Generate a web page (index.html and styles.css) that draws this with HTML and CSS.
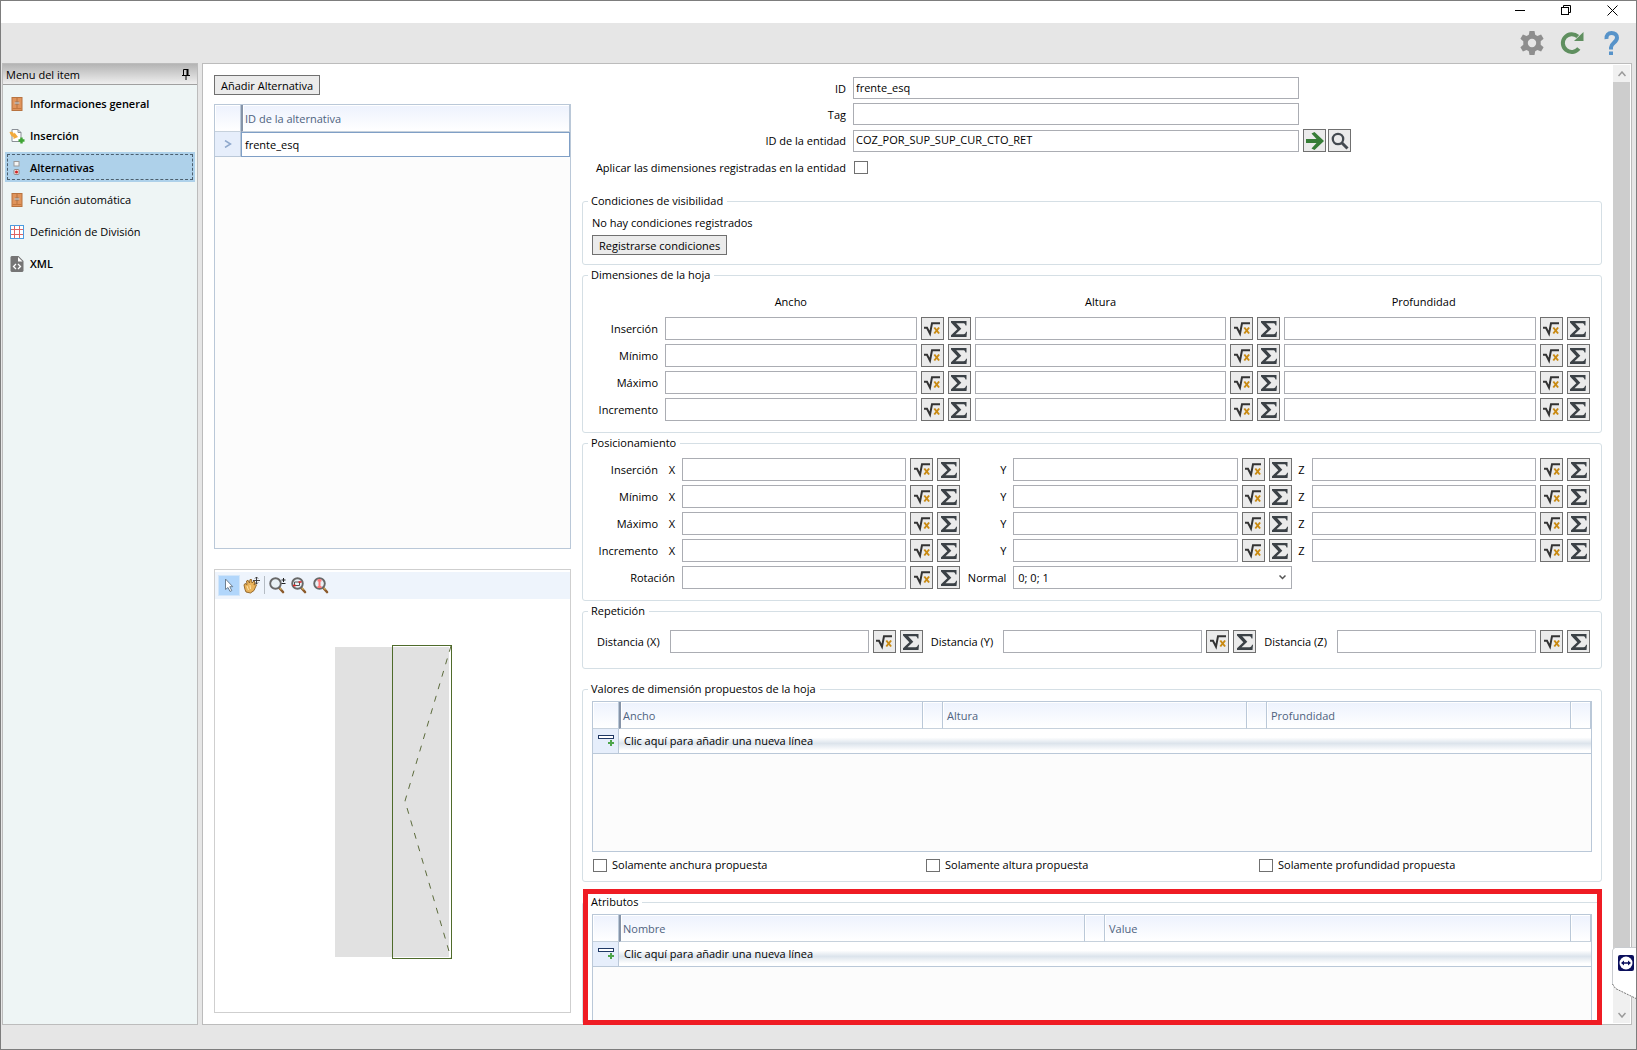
FILE: index.html
```html
<!DOCTYPE html>
<html lang="es">
<head>
  <meta charset="UTF-8">
  <title>Menu del item</title>
  <link rel="stylesheet" href="styles.css">
</head>
<body>
  <!-- Shared icons -->
  <svg class="sprite" aria-hidden="true">
    <symbol id="i-door" viewBox="0 0 11 14">
      <rect x="0.5" y="0.5" width="10" height="13" fill="#e0945c" stroke="#b8733f"/>
      <path d="M5.5 1v11" stroke="#b8733f"/>
      <path d="M1 11.5h9" stroke="#c4783f"/>
      <path d="M4.5 4.500v3M6.500 4.500v3" stroke="#5f6468"/>
      <path d="M3 6h5" stroke="#d9dcdf"/>
    </symbol>
    <symbol id="i-root" viewBox="0 0 16 16">
      <path d="M0 6.700h3l3 6L8 2.200H16" fill="none" stroke="#333" stroke-width="2"/>
      <path d="M10.300 6.500l4.800 6M15.100 6.500l-4.800 6" stroke="#c98a12" stroke-width="2"/>
    </symbol>
    <symbol id="i-sum" viewBox="0 0 16 16">
      <path d="M0 0H15.500V4.500H14.500C14.200 2.800 13.500 2.300 12 2.300H5.200L10.300 7.700 4.500 13.200H12.500C14 13.200 14.700 12.300 15 10.800H16L15.500 16H0V14.200L6.300 8.200 0 1.500z" fill="#3b4146"/>
    </symbol>
    <symbol id="i-addrow" viewBox="0 0 16 12">
      <rect x="0.5" y="0.5" width="15" height="3" fill="#fff" stroke="#1f3864"/>
      <path d="M13 5v6M10 8h6" stroke="#4ea64b" stroke-width="2"/>
    </symbol>
    <symbol id="i-lens" viewBox="0 0 17 17">
      <path d="M9.500 10l4.500 5" stroke="#8b5a2b" stroke-width="2.600" stroke-linecap="round"/>
      <path d="M9.500 9.500l3 3.200" stroke="#d5b05c" stroke-width="1.200"/>
      <circle cx="6.500" cy="6.500" r="5.300" fill="#e9f1f5" stroke="#686868" stroke-width="1.900"/>
    </symbol>
  </svg>

  <div class="window">
    <div class="titlebar">
      <button class="win-btn" aria-label="Minimizar">
        <svg width="11" height="11" viewBox="0 0 11 11"><path d="M0 5.500h10" stroke="#000"/></svg>
      </button>
      <button class="win-btn" aria-label="Restaurar">
        <svg width="11" height="11" viewBox="0 0 11 11" fill="none" stroke="#000"><rect x="0.5" y="2.5" width="7" height="7"/><path d="M2.500 2V.5h7v7H8"/></svg>
      </button>
      <button class="win-btn" aria-label="Cerrar">
        <svg width="11" height="11" viewBox="0 0 11 11"><path d="M.5 .5l10 10M10.500 .5l-10 10" stroke="#000"/></svg>
      </button>
    </div>

    <div class="toolbar">
      <button class="tool-btn" aria-label="Configuración">
        <svg width="24" height="24" viewBox="0 0 24 24"><path fill="#8e8e8e" fill-rule="evenodd" d="M9.500 0h5l.7 3.700 2.200 1.200 3.700-1.300 2.500 4.200-2.900 2.500v3.400l2.900 2.500-2.500 4.200-3.700-1.300-2.200 1.200-.7 3.700h-5l-.7-3.700-2.200-1.200-3.700 1.300L.4 16.200l2.900-2.500v-3.400L.4 7.800l2.500-4.200 3.700 1.300 2.200-1.200zM12 7.800a4.200 4.200 0 1 0 0 8.400 4.200 4.200 0 0 0 0-8.400z"/></svg>
      </button>
      <button class="tool-btn" aria-label="Actualizar">
        <svg width="24" height="24" viewBox="0 0 24 24"><path d="M18.800 17.500a8.900 8.900 0 1 1-1-12" fill="none" stroke="#5f8f5f" stroke-width="4"/><path d="M23.500 1v9H14z" fill="#5f8f5f"/></svg>
      </button>
      <button class="tool-btn" aria-label="Ayuda">
        <svg width="24" height="24" viewBox="-4 0 24 24"><path d="M2.500 8C2 4 4.500 2 7.500 2c3.500 0 5.500 2 5.500 4.800 0 4.700-6 5.200-6 9.700v2" fill="none" stroke="#5793c9" stroke-width="4"/><path d="M5 20.500h4V24H5z" fill="#5793c9"/></svg>
      </button>
    </div>

    <div class="workspace">
      <nav class="sidebar">
        <div class="sidebar-header">
          <span>Menu del item</span>
          <svg width="8" height="11" viewBox="0 0 8 11"><path d="M1.500 6V.5h4V6M0 6.500h8M4 7v4" fill="none" stroke="#000"/><path d="M5.500 0v6" stroke="#000" stroke-width="2"/></svg>
        </div>
        <ul class="menu">
          <li><a href="#" class="strong"><svg class="menu-icon" width="11" height="14"><use href="#i-door"/></svg>Informaciones general</a></li>
          <li><a href="#" class="strong">
            <svg class="menu-icon" width="15" height="15" viewBox="0 0 15 15"><path d="M2.500 .5h6l3 3v9h-9z" fill="#fff" stroke="#8b9097"/><path d="M8.500 .5v3h3" fill="none" stroke="#8b9097"/><path d="M0 3c3-1 4 .5 4.500 2L5 3.500 8.500 8 4 10V8C2 7.500 1 6 0 3z" fill="#f2a93b"/><path d="M12 8.500v6M9 11.500h6" stroke="#3fa535" stroke-width="2.400"/></svg>Inserción</a></li>
          <li><a href="#" class="strong selected">
            <svg class="menu-icon" width="11" height="14" viewBox="0 0 11 14"><rect x="2.500" y=".5" width="5" height="4.500" fill="#f5f5f5" stroke="#9a9a9a"/><rect x="2.500" y="8.500" width="5" height="5" rx="1" fill="#f8e4e4" stroke="#8d8d8d"/><circle cx="5" cy="11" r="1.500" fill="#c22"/></svg>Alternativas</a></li>
          <li><a href="#"><svg class="menu-icon" width="11" height="14"><use href="#i-door"/></svg>Función automática</a></li>
          <li><a href="#">
            <svg class="menu-icon" width="14" height="14" viewBox="0 0 14 14"><rect x=".5" y=".5" width="13" height="13" fill="#fff" stroke="#4c9be0"/><path d="M4.500 1v12M9.500 1v12M1 4.500h12M1 9.500h12" stroke="#dc6464"/></svg>Definición de División</a></li>
          <li><a href="#" class="strong">
            <svg class="menu-icon" width="13" height="16" viewBox="0 0 13 16"><path d="M1 0h7l5 5v10l-1 1H1l-1-1V1z" fill="#757575"/><path d="M7.500 1v4.500H12z" fill="#fff"/><path d="M5.500 8L3 10.500 5.500 13M7.500 8l2.500 2.500L7.500 13" fill="none" stroke="#fff" stroke-width="1.300"/></svg>XML</a></li>
        </ul>
      </nav>

      <main class="panel">
        <section class="left">
          <button class="btn">Añadir Alternativa</button>
          <div class="grid-box">
            <table class="grid">
              <colgroup><col class="col-mark"><col></colgroup>
              <thead>
                <tr><th></th><th class="first">ID de la alternativa</th></tr>
              </thead>
              <tbody>
                <tr>
                  <td class="mark"><svg width="8" height="8" viewBox="0 0 8 8"><path d="M1 .5l5.500 3.500L1 7.500" fill="none" stroke="#8fa8cc" stroke-width="1.500"/></svg></td>
                  <td class="current">frente_esq</td>
                </tr>
              </tbody>
            </table>
          </div>
          <div class="preview">
            <div class="preview-tools">
              <button class="view-btn active" aria-label="Seleccionar">
                <svg width="17" height="17" viewBox="0 0 17 17"><path d="M4.500 2v10.500l2.500-2 2 4 1.800-.9-2-3.900h3z" fill="#fff" stroke="#6d7f90"/></svg>
              </button>
              <button class="view-btn" aria-label="Desplazar">
                <svg width="17" height="17" viewBox="0 0 17 17"><path d="M1 8l1-1.500 2 1L3.500 4l1.500-.8L6.500 6 7 2.500h1.500L9 6l2-2 1 1-1 3 1.500-1 1 .8L11 13.500 7.500 16 3 15l-1-2.500z" fill="#e8b25a" stroke="#8c5f22" stroke-width=".9"/><path d="M4 9l1.500 4M7 8l.5 4" stroke="#ffe3a8"/><path d="M13.500 0v7M10 3.500h7M12 1.500L13.500 0 15 1.500M12 5.500L13.500 7 15 5.500" fill="none" stroke="#333" stroke-width=".9"/></svg>
              </button>
              <span class="divider"></span>
              <button class="view-btn" aria-label="Zoom">
                <svg width="17" height="17" viewBox="0 0 17 17"><use href="#i-lens"/><path d="M14.500 1v4M12.500 3h4M12.500 6.500h4" stroke="#222"/></svg>
              </button>
              <button class="view-btn" aria-label="Zoom ventana">
                <svg width="17" height="17" viewBox="0 0 17 17"><use href="#i-lens"/><path d="M3.500 5h5v3.500h-5z" fill="none" stroke="#555"/><path d="M7.500 5h3M2 8.500h3" stroke="#d22" stroke-width="1.500"/></svg>
              </button>
              <button class="view-btn" aria-label="Zoom extensión">
                <svg width="17" height="17" viewBox="0 0 17 17"><use href="#i-lens"/><path d="M6.500 2v9M4.500 3.500h4M4.500 10h4" stroke="#f77" stroke-width="2"/></svg>
              </button>
            </div>
            <div class="canvas">
              <svg width="118" height="314" viewBox="0 0 118 314">
                <rect x="0" y="2" width="114" height="310" fill="#e1e1e1"/>
                <path d="M58 1.500h58M114.500 2v310M58 312.500h58" stroke="#fff"/>
                <rect x="57.500" y=".5" width="59" height="313" fill="none" stroke="#4f6b2b"/>
                <path d="M116 1L70 156 116 313" fill="none" stroke="#5c6b3c" stroke-dasharray="6 7"/>
              </svg>
            </div>
          </div>
        </section>

        <form class="right">
          <div class="entity">
            <label for="id">ID</label>
            <input type="text" id="id" value="frente_esq">
            <span></span>
            <label for="tag">Tag</label>
            <input type="text" id="tag">
            <span></span>
            <label for="entity">ID de la entidad</label>
            <input type="text" id="entity" value="COZ_POR_SUP_SUP_CUR_CTO_RET">
            <div class="actions">
              <button type="button" class="icon-btn" aria-label="Ir a la entidad">
                <svg width="20" height="18" viewBox="0 0 20 18"><path d="M1 7h10.500L6.500 1.500 9.500 0 19 9l-9.500 9-3-1.500L11.500 11H1z" fill="#367d36"/></svg>
              </button>
              <button type="button" class="icon-btn" aria-label="Buscar">
                <svg width="18" height="18" viewBox="0 0 18 18"><circle cx="7" cy="7" r="5.200" fill="none" stroke="#444a50" stroke-width="2.300"/><path d="M11 11l5.500 5.500" stroke="#444a50" stroke-width="3"/></svg>
              </button>
            </div>
            <label for="apply">Aplicar las dimensiones registradas en la entidad</label>
            <input type="checkbox" id="apply">
          </div>

          <fieldset class="conditions">
            <legend>Condiciones de visibilidad</legend>
            <p>No hay condiciones registrados</p>
            <button type="button" class="btn">Registrarse condiciones</button>
          </fieldset>

          <fieldset>
            <legend>Dimensiones de la hoja</legend>
            <div class="dimensions" id="dimensions">
              <span></span>
              <span class="col-title">Ancho</span>
              <span class="col-title">Altura</span>
              <span class="col-title last">Profundidad</span>
            </div>
          </fieldset>

          <fieldset>
            <legend>Posicionamiento</legend>
            <div class="positions" id="positions"></div>
          </fieldset>

          <fieldset class="repetition">
            <legend>Repetición</legend>
            <div class="distances" id="distances"></div>
          </fieldset>

          <fieldset class="values">
            <legend>Valores de dimensión propuestos de la hoja</legend>
            <div class="grid-box">
              <table class="grid">
                <colgroup><col class="col-mark"><col><col class="col-small"><col><col class="col-small"><col><col class="col-small"></colgroup>
                <thead>
                  <tr><th></th><th class="first">Ancho</th><th></th><th>Altura</th><th></th><th>Profundidad</th><th></th></tr>
                </thead>
                <tbody>
                  <tr><td class="mark"><svg width="16" height="12"><use href="#i-addrow"/></svg></td><td class="new-row" colspan="6">Clic aquí para añadir una nueva línea</td></tr>
                </tbody>
              </table>
            </div>
            <div class="checks">
              <label><input type="checkbox">Solamente anchura propuesta</label>
              <label><input type="checkbox">Solamente altura propuesta</label>
              <label><input type="checkbox">Solamente profundidad propuesta</label>
            </div>
          </fieldset>

          <div class="highlight">
            <fieldset class="attributes">
              <legend>Atributos</legend>
              <div class="grid-box">
                <table class="grid">
                  <colgroup><col class="col-mark"><col><col class="col-small"><col><col class="col-small"></colgroup>
                  <thead>
                    <tr><th></th><th class="first">Nombre</th><th></th><th>Value</th><th></th></tr>
                  </thead>
                  <tbody>
                    <tr><td class="mark"><svg width="16" height="12"><use href="#i-addrow"/></svg></td><td class="new-row" colspan="4">Clic aquí para añadir una nueva línea</td></tr>
                  </tbody>
                </table>
              </div>
            </fieldset>
          </div>
        </form>

        <div class="scrollbar" aria-hidden="true">
          <span class="arrow"><svg width="8" height="6" viewBox="0 0 8 6"><path d="M.5 5L4 1l3.500 4" fill="none" stroke="#9a9a9a" stroke-width="1.500"/></svg></span>
          <span class="thumb"></span>
          <span class="track"></span>
          <span class="arrow"><svg width="8" height="6" viewBox="0 0 8 6"><path d="M.5 1L4 5l3.500-4" fill="none" stroke="#9a9a9a" stroke-width="1.500"/></svg></span>
        </div>
      </main>
    </div>
    <div class="statusbar"></div>

    <div class="remote-tab">
      <svg width="24" height="52" viewBox="0 0 24 52">
        <path d="M24 .5H3L.5 3v35l3 3.500L24 51.500z" fill="#fff"/>
        <path d="M24 .5H3L.5 3v35" fill="none" stroke="#c9ccd0"/>
        <path d="M.5 37l3 4.500L24 51.500" fill="none" stroke="#777" stroke-dasharray="2 1"/>
        <rect x="6" y="8" width="16" height="16" rx="2" fill="#0b0f5c"/>
        <circle cx="14" cy="16" r="6.500" fill="#fff"/>
        <path d="M9 16l3-2.500v1.700h4v-1.700l3 2.500-3 2.500v-1.700h-4v1.700z" fill="#0b0f5c"/>
      </svg>
    </div>
  </div>

  <script src="script.js"></script>
</body>
</html>
```

FILE: styles.css
```css
* {
  box-sizing: border-box;
}
body {
  margin: 0;
  background: #e6e6e6;
  color: #000;
  font: 11px/16px 'Open Sans', 'Segoe UI', sans-serif;
}
button, input, select {
  font: inherit;
  color: inherit;
  margin: 0;
}
button {
  padding: 0;
}
svg {
  display: block;
}
.sprite {
  position: absolute;
  width: 0;
  height: 0;
}

/* Window frame */
.window {
  position: relative;
  display: flex;
  flex-direction: column;
  height: 100vh;
  min-height: 1000px;
  border: 1px solid #7d7d7d;
}
.titlebar {
  display: flex;
  justify-content: flex-end;
  height: 22px;
  padding-right: 1px;
  background: #fff;
}
.win-btn {
  display: flex;
  justify-content: center;
  align-items: center;
  width: 46px;
  height: 18px;
  border: none;
  background: none;
}
.toolbar {
  display: flex;
  justify-content: flex-end;
  align-items: center;
  gap: 16px;
  height: 40px;
  padding-right: 12px;
}
.tool-btn {
  border: none;
  background: none;
}
.workspace {
  flex: 1;
  display: flex;
  gap: 4px;
  min-height: 0;
  padding: 0 4px 0 1px;
}
.statusbar {
  height: 24px;
}

/* Side menu */
.sidebar {
  flex: 0 0 196px;
  border: 1px solid #bcbcbc;
  background: #eef5f5;
}
.sidebar-header {
  display: flex;
  justify-content: space-between;
  align-items: center;
  height: 21px;
  padding: 1px 7px 0 3px;
  border-bottom: 1px solid #a0a0a0;
  background: linear-gradient(#b4b4b4, #efefef);
}
.menu {
  display: flex;
  flex-direction: column;
  gap: 2px;
  margin: 0;
  padding: 3px 2px;
  list-style: none;
}
.menu a {
  display: flex;
  align-items: center;
  height: 30px;
  padding: 2px 0 0 3px;
  color: #000;
  text-decoration: none;
}
.menu a.strong {
  font-weight: 600;
}
.menu a.selected {
  background: #aed1ea;
  outline: 1px dashed #4c5f6e;
  outline-offset: -3px;
}
.menu-icon {
  width: 18px;
  margin-right: 4px;
}

/* Main panel */
.panel {
  flex: 1;
  display: flex;
  min-width: 0;
  border: 1px solid #bcbcbc;
  background: #fff;
}
.left {
  flex: 0 0 368px;
  display: flex;
  flex-direction: column;
  align-items: stretch;
  padding: 11px 0 11px 11px;
}
.btn {
  align-self: flex-start;
  height: 20px;
  padding: 1px 6px 0;
  border: 1px solid #707070;
  background: #ebebeb;
  line-height: 17px;
}
.left .grid-box {
  flex: 1;
  margin: 9px 0 20px;
}
.preview {
  flex: 1;
  display: flex;
  flex-direction: column;
  border: 1px solid #cfcfcf;
}
.preview-tools {
  display: flex;
  align-items: center;
  height: 27px;
  margin-top: 2px;
  padding-left: 3px;
  background: #eef4fc;
}
.view-btn {
  display: flex;
  justify-content: center;
  align-items: center;
  width: 22px;
  height: 21px;
  border: 1px solid transparent;
  background: none;
}
.view-btn.active {
  border-color: #d2e6fa;
  background: #b1d6fb;
}
.divider {
  width: 1px;
  height: 18px;
  margin: 0 1px 0 2px;
  background: #b5bcc4;
}
.canvas {
  flex: 1;
  display: flex;
  justify-content: center;
  align-items: center;
  padding: 0 0 6px 2px;
}

/* Grids */
.grid-box {
  border: 1px solid #bac8d8;
  background: #fcfcfc;
}
.grid {
  width: 100%;
  table-layout: fixed;
  border-collapse: separate;
  border-spacing: 0;
}
.col-mark {
  width: 26px;
}
.col-small {
  width: 20px;
}
.grid th {
  height: 27px;
  padding: 2px 4px 0;
  border-right: 1px solid #bac8d8;
  border-bottom: 1px solid #c6d1dc;
  background: linear-gradient(#edf2fd, #fff);
  box-shadow: inset 1px 1px #fff;
  color: #4f6380;
  font-weight: 400;
  text-align: left;
}
.grid th.first {
  padding-left: 2px;
  border-left: 2px solid #8694a8;
}
.grid td {
  height: 25px;
  padding: 0 5px;
  border-bottom: 1px solid #bac8d8;
}
.grid td.mark {
  border-right: 1px solid #bac8d8;
  background: #e6eefb;
}
.grid td.current {
  padding-left: 3px;
  border: 1px solid #7f9fc6;
  background: #fff;
}
.mark svg {
  margin: 0 auto;
}
.new-row {
  background: linear-gradient(#fff 35%, #dce4ec 60%, #fff 90%);
}

/* Item form */
.right {
  flex: 1;
  display: flex;
  flex-direction: column;
  min-width: 0;
  padding: 13px 11px 0 11px;
}
input[type="text"], select {
  width: 100%;
  min-width: 0;
  height: 23px;
  padding: 0 2px 2px;
  border: 1px solid #abadb3;
  border-radius: 0;
  background: #fff;
}
input[type="checkbox"] {
  appearance: none;
  width: 14px;
  height: 13px;
  border: 1px solid #707070;
  background: #fff;
}
select {
  appearance: none;
  padding: 0 4px;
}
.entity {
  display: grid;
  grid-template-columns: 267fr 446fr 299fr;
  gap: 4px;
  align-items: center;
  margin-bottom: 14px;
}
.entity input[type="text"] {
  height: 22px;
}
.entity label {
  padding: 1px 3px 0 0;
  text-align: right;
}
.entity input[type="checkbox"] {
  margin: 5px 1px;
}
.actions {
  display: flex;
  gap: 2px;
}
.icon-btn {
  display: flex;
  flex: 0 0 23px;
  justify-content: center;
  align-items: center;
  height: 23px;
  border: 1px solid #707070;
  background: #ebebeb;
}

fieldset {
  min-width: 0;
  margin: 0 0 2px;
  padding: 7px 11px 11px 9px;
  border: 1px solid #d5dfe5;
  border-radius: 3px;
}
legend {
  margin-left: -4px;
  padding: 0 4px 0 3px;
}
.conditions {
  padding-top: 6px;
  padding-bottom: 9px;
}
.conditions p {
  margin: 0 0 4px;
}
.conditions .btn {
  display: block;
}
.repetition {
  margin-bottom: 12px;
  padding-top: 11px;
  padding-bottom: 15px;
}
.dimensions {
  display: grid;
  grid-template-columns: 69px repeat(3, 1fr);
  gap: 4px;
}
.col-title {
  padding-right: 54px;
  line-height: 23px;
  text-align: center;
}
.col-title.last {
  padding-right: 27px;
}
.field {
  display: flex;
  gap: 4px;
  min-width: 0;
}
.row-label, .axis, .distances label {
  line-height: 23px;
}
.row-label {
  padding-right: 3px;
  text-align: right;
}
.positions {
  display: grid;
  grid-template-columns: 69px 13px 1fr 45px 1fr 12px 1fr;
  gap: 4px;
}
.axis {
  padding-right: 3px;
  text-align: right;
}
.axis.wide {
  grid-column: span 2;
}
.select-box {
  position: relative;
}
.select-box svg {
  position: absolute;
  top: 9px;
  right: 6px;
  pointer-events: none;
}
.distances {
  display: grid;
  grid-template-columns: repeat(3, auto 1fr);
  gap: 7px;
  padding-left: 4px;
}
.distances label {
  padding: 0 3px 0 1px;
}

.values {
  margin-bottom: 12px;
  padding: 4px 9px 8px;
}
.values .grid-box {
  height: 151px;
}
.checks {
  display: grid;
  grid-template-columns: repeat(3, 1fr);
  margin-top: 5px;
  padding-left: 1px;
}
.checks label {
  display: flex;
  align-items: center;
  gap: 5px;
}

.highlight {
  position: relative;
  flex: 1;
  display: flex;
}
.highlight::after {
  content: "";
  position: absolute;
  inset: -5px 0 -1px 1px;
  border: 5px solid #ef1c24;
  pointer-events: none;
}
.attributes {
  flex: 1;
  display: flex;
  flex-direction: column;
  margin: 0;
  padding: 4px 9px 0;
  border-bottom: none;
}
.attributes .grid-box {
  flex: 1;
  border-bottom: none;
}

.scrollbar {
  flex: 0 0 17px;
  display: flex;
  flex-direction: column;
  margin: 1px 1px 1px 0;
  background: #f0f0f0;
}
.arrow {
  display: flex;
  justify-content: center;
  align-items: center;
  height: 17px;
}
.thumb {
  flex: 94;
  background: #cdcdcd;
}
.track {
  flex: 6;
}
.remote-tab {
  position: absolute;
  right: 0;
  bottom: 50px;
}
```

FILE: script.js
```js
// Input with its formula and sum buttons
function field(id, name) {
  return `
    <div class="field">
      <input type="text" id="${id}" aria-label="${name}">
      <button type="button" class="icon-btn" aria-label="Fórmula ${name}"><svg width="16" height="16"><use href="#i-root"/></svg></button>
      <button type="button" class="icon-btn" aria-label="Suma ${name}"><svg width="16" height="16"><use href="#i-sum"/></svg></button>
    </div>`;
}

const ROWS = ["Inserción", "Mínimo", "Máximo", "Incremento"];

let dimensions = "";
let positions = "";
ROWS.forEach((row, i) => {
  dimensions += `<label class="row-label" for="dim-${i}-0">${row}</label>`;
  ["Ancho", "Altura", "Profundidad"].forEach((col, j) => {
    dimensions += field(`dim-${i}-${j}`, `${row} ${col}`);
  });

  positions += `<span class="row-label">${row}</span>`;
  ["X", "Y", "Z"].forEach((axis) => {
    positions += `<label class="axis" for="pos-${i}-${axis}">${axis}</label>`;
    positions += field(`pos-${i}-${axis}`, `${row} ${axis}`);
  });
});
positions += `
  <label class="axis wide" for="rotation">Rotación</label>
  ${field("rotation", "Rotación")}
  <label class="axis" for="normal">Normal</label>
  <div class="select-box">
    <select id="normal"><option>0; 0; 1</option></select>
    <svg width="7" height="5" viewBox="0 0 7 5"><path d="M.5 .5l3 3 3-3" fill="none" stroke="#555" stroke-width="1.500"/></svg>
  </div>`;

document.getElementById("dimensions").insertAdjacentHTML("beforeend", dimensions);
document.getElementById("positions").innerHTML = positions;
document.getElementById("distances").innerHTML = ["X", "Y", "Z"].map((axis) =>
  `<label for="dist-${axis}">Distancia (${axis})</label>${field("dist-" + axis, `Distancia (${axis})`)}`
).join("");
```
